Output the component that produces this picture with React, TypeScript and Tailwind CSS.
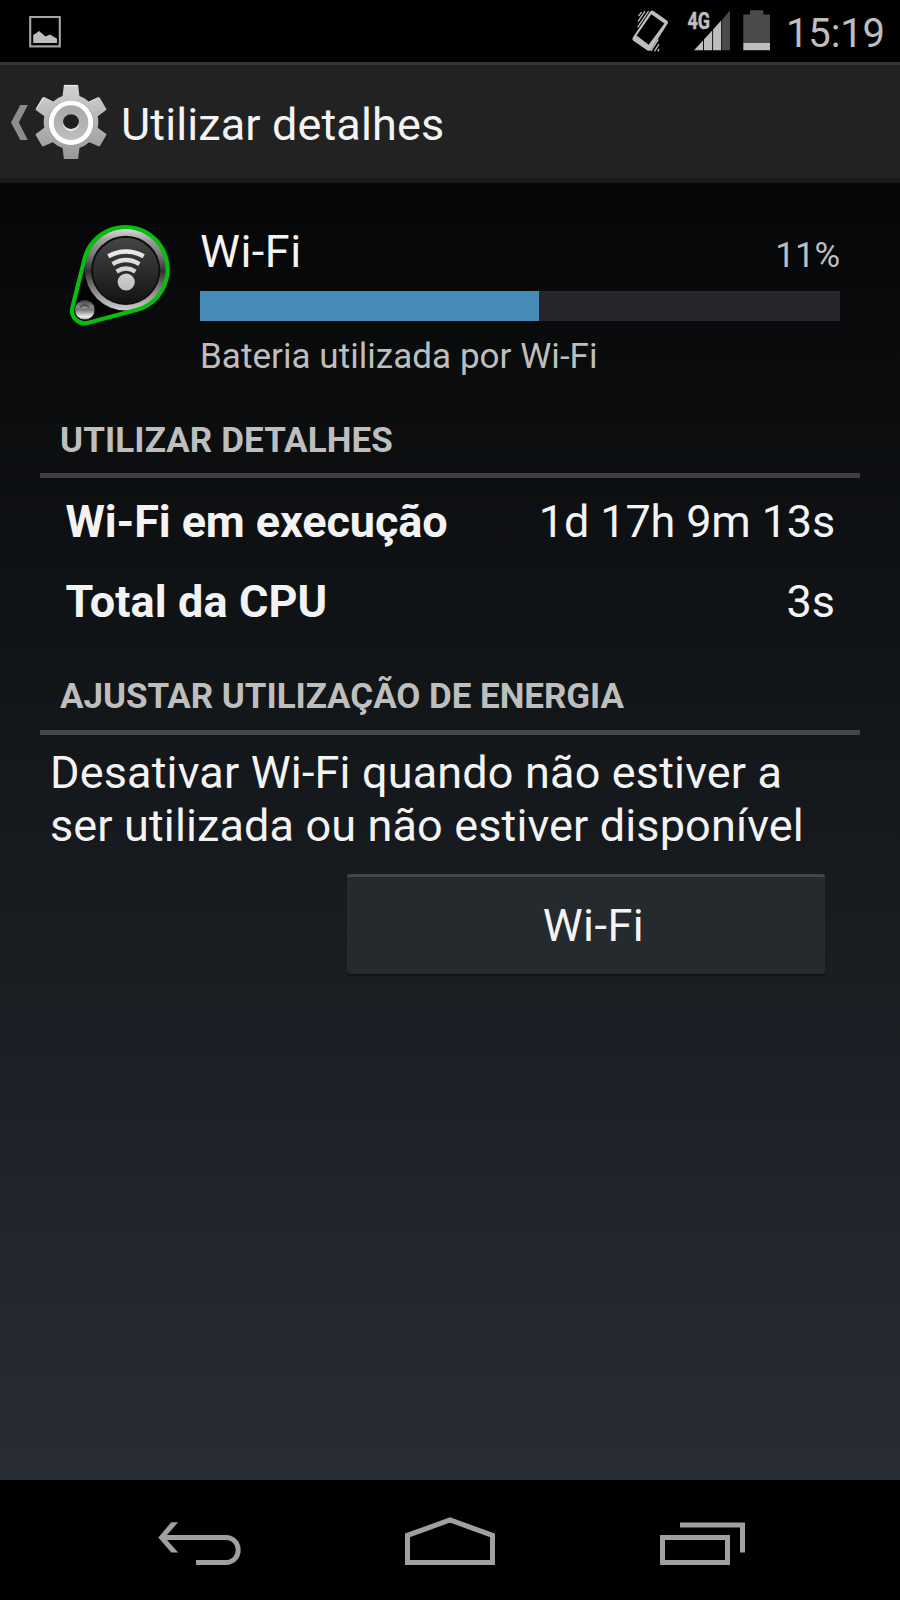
function PictureIcon() {
  return (
    <svg width="32" height="32" viewBox="29 16 32 32">
      <rect x="30.2" y="17" width="29.6" height="29.4" fill="none" stroke="#a6a6a6" strokeWidth="2.1" />
      <path d="M33.2 42.9V35L36 33.2 39 31 45.5 36.6 50 34.6 57 38.8V42.9Z" fill="#bebebe" />
    </svg>
  );
}

function VibrateIcon() {
  return (
    <svg width="36" height="44" viewBox="632 9 36 44">
      <path
        fillRule="evenodd"
        fill="#bebebe"
        d="M650.4 11.3Q651.7 10.1 653.4 11L667 20.4Q668.5 21.8 667.7 23.4L650.9 49.8Q649.5 51.5 647.5 50.5L633 40.6Q632 39.2 632.8 37.4ZM651.3 14.3L636.6 35.4 648.7 44.7 664.4 23.6Z"
      />
      <path
        d="M648.6 11.2L637.6 27.4M645 11.2L638 21.6M641.4 12.2L638.6 16.2M650.8 51.2L658.4 39.4M654.4 51.4L659 44.2M657.6 51.4L659.2 48.8"
        stroke="#bebebe"
        strokeWidth="1.3"
      />
    </svg>
  );
}

function SignalIcon() {
  return (
    <svg width="44" height="42" viewBox="687 9 44 42">
      <path d="M694 50.2L703 40.4V50.2ZM703.9 39.4L712.2 30.5V50.2H703.9ZM713.1 29.4L721.2 20.6V50.2H713.1Z" fill="#bebebe" />
      <path d="M722.1 19.6L730 10.5V50.2H722.1Z" fill="#4b4b4b" />
      <text x="687.4" y="28.9" textLength="22.6" lengthAdjust="spacingAndGlyphs" fill="#bebebe" stroke="#bebebe" strokeWidth="0.5" className="font-['Roboto',sans-serif] text-[23px] font-bold">
        4G
      </text>
    </svg>
  );
}

function BatteryIcon() {
  return (
    <svg width="27" height="41" viewBox="743 10 27 41">
      <path d="M750 10.3H763.3V14.6H770V43H743.3V14.6H750Z" fill="#4b4b4b" />
      <rect x="743.3" y="43" width="26.7" height="7.2" fill="#bebebe" />
    </svg>
  );
}

const TEETH = [0, 60, 120, 180, 240, 300];

function UpAndGear() {
  return (
    <svg width="110" height="90" viewBox="0 77 110 90" className="shrink-0">
      <defs>
        <linearGradient id="gearBody" gradientUnits="userSpaceOnUse" x1="0" y1="85" x2="0" y2="160">
          <stop offset="0" stopColor="#d2d2d2" />
          <stop offset="1" stopColor="#979797" />
        </linearGradient>
        <linearGradient id="gearHub" x1="0" y1="0" x2="0" y2="1">
          <stop offset="0" stopColor="#a6a6a6" />
          <stop offset="1" stopColor="#c0c0c0" />
        </linearGradient>
        <clipPath id="gearShape">
          <circle cx="71" cy="122" r="27.3" />
          {TEETH.map((a) => (
            <path key={a} d="M63.8 85.5Q63.9 84.9 64.6 84.9H77.4Q78.1 84.9 78.2 85.5L79.6 97.5 82 100H60L62.4 97.5Z" transform={`rotate(${a} 71 122)`} />
          ))}
        </clipPath>
      </defs>
      <path d="M20.3 105H27.8L18.8 122.5 27.8 140H20.3L11 122.5Z" fill="#8d8d8d" />
      <rect x="33" y="84" width="76" height="77" fill="url(#gearBody)" clipPath="url(#gearShape)" />
      <path d="M64 85.4H78M36.6 108.3L43.8 97.4 52.6 101.8M89.4 101.8L98.6 97.4" fill="none" stroke="#f0f0f0" strokeWidth="1" />
      <circle cx="71" cy="123" r="19.8" fill="none" stroke="#9a9a9a" strokeWidth="6" />
      <circle cx="71" cy="122.7" r="19.8" fill="url(#gearHub)" stroke="#fff" strokeWidth="4.9" />
      <ellipse cx="71" cy="123" rx="8.1" ry="8.3" fill="#e8e8e8" />
      <ellipse cx="71" cy="121.6" rx="8" ry="7.3" fill="#1e1e1e" />
    </svg>
  );
}

function WifiAppIcon() {
  return (
    <svg width="104" height="106" viewBox="68 222 104 106" className="shrink-0">
      <defs>
        <linearGradient id="ring" x1="0" y1="0" x2="0" y2="1">
          <stop offset="0" stopColor="#dcdcdc" />
          <stop offset="0.14" stopColor="#a0a0a0" />
          <stop offset="0.32" stopColor="#787878" />
          <stop offset="0.52" stopColor="#303030" />
          <stop offset="0.72" stopColor="#7c7c7c" />
          <stop offset="1" stopColor="#cfcfcf" />
        </linearGradient>
        <linearGradient id="face" x1="0" y1="0" x2="0" y2="1">
          <stop offset="0" stopColor="#454545" />
          <stop offset="1" stopColor="#131313" />
        </linearGradient>
        <linearGradient id="ball" x1="0" y1="0" x2="0" y2="1">
          <stop offset="0" stopColor="#3c3c3c" />
          <stop offset="0.35" stopColor="#8b8b8b" />
          <stop offset="0.5" stopColor="#777777" />
          <stop offset="0.85" stopColor="#ededed" />
          <stop offset="1" stopColor="#a8a8a8" />
        </linearGradient>
        <linearGradient id="glyph" gradientUnits="userSpaceOnUse" x1="0" y1="249" x2="0" y2="291">
          <stop offset="0" stopColor="#ededed" />
          <stop offset="1" stopColor="#bcbcbc" />
        </linearGradient>
      </defs>
      <path d="M72.4 307.5L84.4 259.5A42.2 42.2 0 1 1 137.8 309.6L88.2 322.7A12.7 12.7 0 0 1 72.4 307.5Z" fill="#030403" />
      <circle cx="125.9" cy="269.6" r="41" fill="url(#ring)" />
      <circle cx="125.7" cy="270.3" r="34.6" fill="#0c0c0c" />
      <circle cx="125.7" cy="270.6" r="32.8" fill="url(#face)" />
      <path
        d="M72.4 307.5L84.4 259.5A42.2 42.2 0 1 1 137.8 309.6L88.2 322.7A12.7 12.7 0 0 1 72.4 307.5Z"
        fill="none"
        stroke="#08bd0c"
        strokeWidth="4.2"
      />
      <circle cx="84.8" cy="309.8" r="9.8" fill="url(#ball)" />
      <path d="M80 307.2Q84.5 303 89 307.2" fill="none" stroke="#444" strokeWidth="1.4" />
      <g fill="none" stroke="url(#glyph)" strokeWidth="4.4">
        <path d="M108.3 256.2Q126 246.8 143.7 256.2" />
        <path d="M112.6 264.2Q126 256 139.4 264.2" />
        <path d="M116.6 271.6Q126 265.6 135.4 271.6" />
      </g>
      <circle cx="126.2" cy="282" r="8.6" fill="url(#glyph)" />
    </svg>
  );
}

function SectionTitle({ children, spacing }: { children: string; spacing: string }) {
  return (
    <div className="ml-10 w-[820px]">
      <h2 className={`pl-5 text-[35px] leading-[41px] font-bold whitespace-nowrap text-[#bebebe] ${spacing}`}>{children}</h2>
    </div>
  );
}

export default function App() {
  return (
    <div className="flex h-[1600px] w-[900px] flex-col overflow-hidden bg-black font-['Roboto',sans-serif] text-[#f3f3f3]">
      <div className="flex h-[1480px] flex-col bg-[linear-gradient(to_bottom,#000000_0%,#171b1f_59%,#282c35_100%)]">
        <div className="flex h-[62px] shrink-0 bg-black pl-[29px]">
          <div className="pt-4">
            <PictureIcon />
          </div>
          <div className="ml-[571px] pt-[9px]">
            <VibrateIcon />
          </div>
          <div className="ml-[19px] pt-[9px]">
            <SignalIcon />
          </div>
          <div className="ml-3 pt-[10px]">
            <BatteryIcon />
          </div>
          <div className="ml-4 pt-[10px] text-[40px] leading-[47px] tracking-[-0.15px] text-[#bebebe]">15:19</div>
        </div>

        <header className="flex h-[121px] shrink-0 items-center border-t-[3px] border-b-[5px] border-t-[#353535] border-b-[#1a1a1a] bg-[#222222] pt-px">
          <UpAndGear />
          <h1 className="ml-[11px] pt-[4px] text-[45px] leading-[53px] tracking-[0.12px]">Utilizar detalhes</h1>
        </header>

        <main className="flex flex-col pt-[39px]">
          <section className="flex pl-[68px]">
            <WifiAppIcon />
            <div className="ml-7 w-[640px]">
              <div className="flex items-baseline justify-between">
                <span className="text-[45px] leading-[59px] tracking-[0.5px]">Wi-Fi</span>
                <span className="text-[35px] leading-[41px] tracking-[-0.1px] text-[#bebebe]">11%</span>
              </div>
              <div className="mt-[10px] h-[30px] bg-[#29252c]">
                <div className="h-full w-[53%] bg-[#478bb8]" />
              </div>
              <p className="mt-[15px] text-[35px] leading-[41px] tracking-[0.045px] text-[#bebebe]">Bateria utilizada por Wi-Fi</p>
            </div>
          </section>

          <div className="mt-[43px]">
            <SectionTitle spacing="tracking-[0.1px]">UTILIZAR DETALHES</SectionTitle>
            <div className="mt-3 ml-10 h-[5px] w-[820px] bg-[#3d3f41]" />
          </div>

          <dl className="mt-[17px] flex flex-col gap-[27px] pr-[65px] pl-[65.5px] text-[45px] leading-[53px]">
            <div className="flex justify-between">
              <dt className="font-bold tracking-[-0.11px]">Wi-Fi em execução</dt>
              <dd className="tracking-[-0.15px]">1d 17h 9m 13s</dd>
            </div>
            <div className="flex justify-between">
              <dt className="font-bold tracking-[0.1px]">Total da CPU</dt>
              <dd>3s</dd>
            </div>
          </dl>

          <div className="mt-12">
            <SectionTitle spacing="tracking-[-0.05px]">AJUSTAR UTILIZAÇÃO DE ENERGIA</SectionTitle>
            <div className="mt-[13px] ml-10 h-[5px] w-[820px] bg-[#42464a]" />
          </div>

          <p className="mt-[11px] ml-[50px] text-[45px] leading-[53px] tracking-[0.16px] whitespace-nowrap">
            Desativar Wi-Fi quando não estiver a<br />
            <span className="tracking-[0.13px]">ser utilizada ou não estiver disponível</span>
          </p>

          <button className="mt-[22px] ml-[347px] h-[100px] w-[478px] rounded-[3px] border-t-[3px] border-t-[#424648] bg-[#252a2f] pl-[15px] text-[45px] leading-[53px] tracking-[0.5px] shadow-[0_2px_1px_#111416]">
            Wi-Fi
          </button>
        </main>
      </div>

      <nav className="flex h-[120px] shrink-0 pl-[158px] pt-9">
        <svg width="84" height="50" viewBox="158 1516 84 50">
          <path d="M158.3 1537.4L171.3 1522.2H178.2L167 1535V1540L178.2 1552.6H171.3Z" fill="#a0a0a0" />
          <path d="M165 1537.5H225.5C242.4 1537.5 242.4 1562.5 225.5 1562.5H196" fill="none" stroke="#a0a0a0" strokeWidth="5" />
        </svg>
        <svg width="90" height="50" viewBox="405 1516 90 50" className="ml-[163px]">
          <path d="M407.5 1562.5V1535.3L450 1520 492.5 1535.3V1562.5Z" fill="none" stroke="#a0a0a0" strokeWidth="5" />
        </svg>
        <svg width="85" height="50" viewBox="660 1516 85 50" className="ml-[165px]">
          <rect x="662.5" y="1537.5" width="65" height="25" fill="none" stroke="#a0a0a0" strokeWidth="5" />
          <path d="M680 1525H742.5V1552.5" fill="none" stroke="#a0a0a0" strokeWidth="5" />
        </svg>
      </nav>
    </div>
  );
}
